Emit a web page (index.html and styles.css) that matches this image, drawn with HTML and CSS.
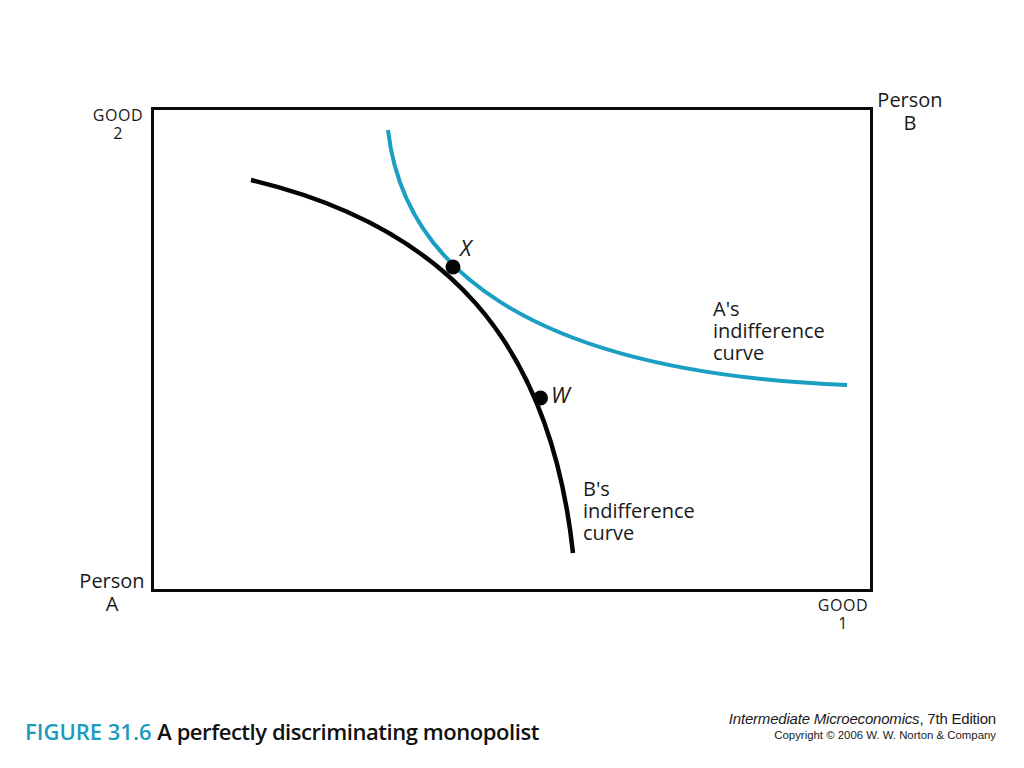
FILE: index.html
```html
<!DOCTYPE html>
<html lang="en">
<head>
<meta charset="utf-8">
<title>Figure 31.6</title>
<link rel="stylesheet" href="styles.css">
</head>
<body>
<div class="slide">
  <div class="diagram">
    <svg class="chart" viewBox="0 0 1024 690" width="1024" height="690" xmlns="http://www.w3.org/2000/svg">
      <rect class="box" x="152.5" y="108.5" width="719" height="482"/>
      <path class="curve-b" d="M251 180 C 445 226, 550 340, 573 553"/>
      <path class="curve-a" d="M388 130 C 403 262, 520 372, 847 385"/>
      <circle class="dot" cx="453" cy="267" r="7.5"/>
      <circle class="dot" cx="540.5" cy="398" r="7.5"/>
    </svg>
    <div class="label axis good2">GOOD<br>2</div>
    <div class="label person personb">Person<br>B</div>
    <div class="label person persona">Person<br>A</div>
    <div class="label axis good1">GOOD<br>1</div>
    <div class="label curve-label alabel">A's<br>indifference<br>curve</div>
    <div class="label curve-label blabel">B's<br>indifference<br>curve</div>
    <div class="label point px">X</div>
    <div class="label point pw">W</div>
  </div>
  <div class="footer">
    <div class="fig-title"><span class="fig-num">FIGURE 31.6</span> <span class="fig-text">A perfectly discriminating monopolist</span></div>
    <div class="credit">
      <div class="book"><em>Intermediate Microeconomics</em>, 7th Edition</div>
      <div class="copy">Copyright © 2006 W. W. Norton &amp; Company</div>
    </div>
  </div>
</div>
</body>
</html>
```

FILE: styles.css
```css
html, body {
  margin: 0;
  padding: 0;
  background: #ffffff;
}

body {
  font-family: "Open Sans", "Lato", sans-serif;
  color: #111111;
}

.slide {
  width: 1024px;
  height: 768px;
  display: flex;
  flex-direction: column;
  overflow: hidden;
}

.diagram {
  position: relative;
  height: 690px;
  flex: none;
}

.chart {
  display: block;
}

.box {
  fill: none;
  stroke: #0a0a0a;
  stroke-width: 3;
}

.curve-b {
  fill: none;
  stroke: #050505;
  stroke-width: 4.5;
}

.curve-a {
  fill: none;
  stroke: #1a9fc2;
  stroke-width: 4;
}

.dot {
  fill: #050505;
}

.label {
  position: absolute;
  text-align: center;
  color: #1a1a1a;
}

.axis {
  font-size: 16px;
  line-height: 18px;
  letter-spacing: 0.6px;
  width: 70px;
}

.good2 {
  left: 83px;
  top: 106px;
}

.good1 {
  left: 808px;
  top: 596px;
}

.person {
  font-size: 20px;
  line-height: 23px;
  width: 80px;
}

.personb {
  left: 870px;
  top: 88px;
}

.persona {
  left: 72px;
  top: 569px;
}

.curve-label {
  text-align: left;
  font-size: 20px;
  line-height: 22px;
}

.alabel {
  left: 713px;
  top: 298px;
}

.blabel {
  left: 583px;
  top: 478px;
}

.point {
  font-style: italic;
  font-size: 22px;
  line-height: 24px;
}

.px {
  left: 460px;
  top: 235px;
}

.pw {
  left: 551px;
  top: 382px;
}

.footer {
  flex: 1;
  display: flex;
  justify-content: space-between;
  align-items: flex-start;
  padding: 0 28px 0 25px;
}

.fig-title {
  margin-top: 26px;
  font-size: 22px;
  font-weight: 600;
  line-height: 30px;
  color: #111111;
}

.fig-num {
  color: #1c9cbd;
}

.fig-text {
  letter-spacing: -0.45px;
}

.credit {
  margin-top: 20px;
  text-align: right;
  font-family: "Liberation Sans", Arial, sans-serif;
  color: #1a1a1a;
}

.book {
  font-size: 15px;
  line-height: 17px;
  letter-spacing: -0.2px;
}

.book em {
  font-style: italic;
}

.copy {
  font-size: 11.4px;
  line-height: 16px;
}
```
